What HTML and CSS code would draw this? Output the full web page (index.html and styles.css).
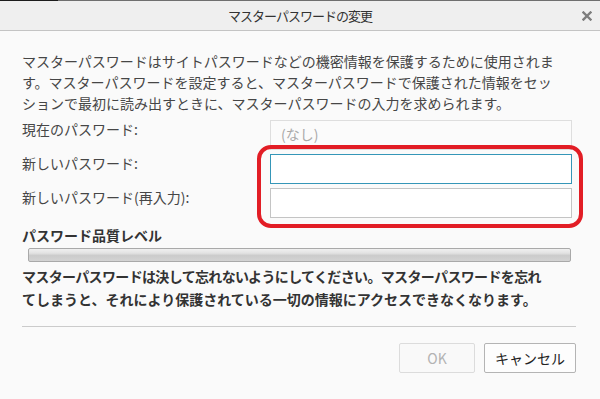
FILE: index.html
```html
<!DOCTYPE html>
<html lang="ja">
<head>
<meta charset="utf-8">
<title>マスターパスワードの変更</title>
<link rel="stylesheet" href="styles.css">
</head>
<body>
<div class="window">
  <div class="topline"></div>
  <header class="titlebar">
    <span class="tb-spacer"></span>
    <h1 class="title">マスターパスワードの変更</h1>
    <span class="close" aria-label="閉じる">
      <svg width="10" height="10" viewBox="0 0 10 10"><path d="M1.5 1.5 L8.5 8.5 M8.5 1.5 L1.5 8.5" stroke="#7d7d7d" stroke-width="2.4" stroke-linecap="square"/></svg>
    </span>
  </header>
  <main class="content">
    <p class="intro"><span class="ln">マスターパスワードはサイトパスワードなどの機密情報を保護するために使用されま</span><span class="ln">す。マスターパスワードを設定すると、マスターパスワードで保護された情報をセッ</span><span class="ln">ションで最初に読み出すときに、マスターパスワードの入力を求められます。</span></p>
    <div class="form">
      <div class="row">
        <label class="lbl">現在のパスワード:</label>
        <div class="field disabled">(なし)</div>
      </div>
      <div class="row">
        <label class="lbl">新しいパスワード:</label>
        <div class="field focused"></div>
      </div>
      <div class="row">
        <label class="lbl">新しいパスワード(再入力):</label>
        <div class="field"></div>
      </div>
    </div>
    <h2 class="quality">パスワード品質レベル</h2>
    <div class="meter"></div>
    <p class="warn"><span class="ln">マスターパスワードは決して忘れないようにしてください。マスターパスワードを忘れ</span><span class="ln ln-wide">てしまうと、それにより保護されている一切の情報にアクセスできなくなります。</span></p>
    <hr class="sep">
    <div class="buttons">
      <button class="btn btn-disabled" disabled>OK</button>
      <button class="btn">キャンセル</button>
    </div>
    <div class="highlight"></div>
  </main>
</div>
</body>
</html>
```
FILE: styles.css
```css
html, body {
  margin: 0;
  padding: 0;
}
body {
  width: 600px;
  height: 399px;
  overflow: hidden;
  background: #fafafa;
  font-family: "Noto Sans CJK JP", "Noto Sans", sans-serif;
  color: #3a3a3a;
}
.window {
  display: flex;
  flex-direction: column;
  height: 399px;
}
.topline {
  height: 1px;
  background: linear-gradient(to right, #1c1c1c 0, #1c1c1c 58px, #6f6f6f 58px, #6f6f6f 100%);
}
.titlebar {
  height: 29px;
  background: #efefef;
  border-bottom: 1px solid #c4c4c4;
  display: flex;
  align-items: center;
}
.tb-spacer {
  width: 30px;
}
.title {
  flex: 1;
  margin: 0;
  text-align: center;
  font-size: 13px;
  font-weight: normal;
  letter-spacing: -1px;
  color: #333;
  line-height: 20px;
}
.close {
  width: 30px;
  display: flex;
  justify-content: center;
  align-items: center;
  padding-left: 4px;
  box-sizing: border-box;
}
.close svg { display: block; }
.content {
  position: relative;
  flex: 1;
  padding: 20px 24px 0 22px;
}
.ln {
  display: block;
  white-space: nowrap;
}
.intro {
  margin: 0;
  font-size: 14px;
  line-height: 21px;
  color: #464646;
}
.form {
  margin-top: 6px;
  margin-right: 4px;
  display: flex;
  flex-direction: column;
  gap: 4px;
}
.row {
  display: flex;
  align-items: flex-start;
}
.lbl {
  width: 248px;
  font-size: 14px;
  line-height: 18px;
  color: #464646;
}
.field {
  flex: 1;
  height: 30px;
  box-sizing: border-box;
  border: 1px solid #c4c4c4;
  background: #fff;
  font-size: 14px;
  line-height: 26px;
  padding-left: 10px;
}
.field.disabled {
  background: #fbfbfb;
  border-color: #dedede;
  color: #a9a9a9;
}
.field.focused {
  border-color: #3596b8;
}
.quality {
  margin: 7px 0 0;
  font-size: 14px;
  font-weight: bold;
  line-height: 20px;
  color: #333;
}
.meter {
  margin: 3px 5px 0 6px;
  height: 14px;
  box-sizing: border-box;
  border: 1px solid #a9a9a9;
  border-radius: 2px;
  background: linear-gradient(to bottom, #f0f0f0 0%, #e2e2e2 35%, #cbcbcb 55%, #d3d3d3 100%);
}
.warn {
  margin: 3px 0 0;
  font-size: 14px;
  font-weight: bold;
  line-height: 23px;
  letter-spacing: -0.65px;
  color: #333;
}
.warn .ln-wide {
  letter-spacing: 0;
}
.sep {
  margin: 15px 0 0;
  border: 0;
  border-top: 1px solid #cbcbcb;
  height: 0;
}
.buttons {
  margin-top: 16px;
  display: flex;
  justify-content: flex-end;
  gap: 9px;
}
.btn {
  height: 30px;
  min-width: 76px;
  padding: 0 10px;
  box-sizing: border-box;
  border: 1px solid #b4b4b4;
  border-radius: 2px;
  background: #fdfdfd;
  font-family: "Noto Sans CJK JP", "Noto Sans", sans-serif;
  font-size: 14px;
  color: #222;
}
.btn-disabled {
  border-color: #dcdcdc;
  color: #b3b3b3;
  background: #f9f9f9;
}
.highlight {
  position: absolute;
  left: 257px;
  top: 114px;
  width: 326px;
  height: 83px;
  box-sizing: border-box;
  border: 4px solid #e21d25;
  border-radius: 14px;
}
```
